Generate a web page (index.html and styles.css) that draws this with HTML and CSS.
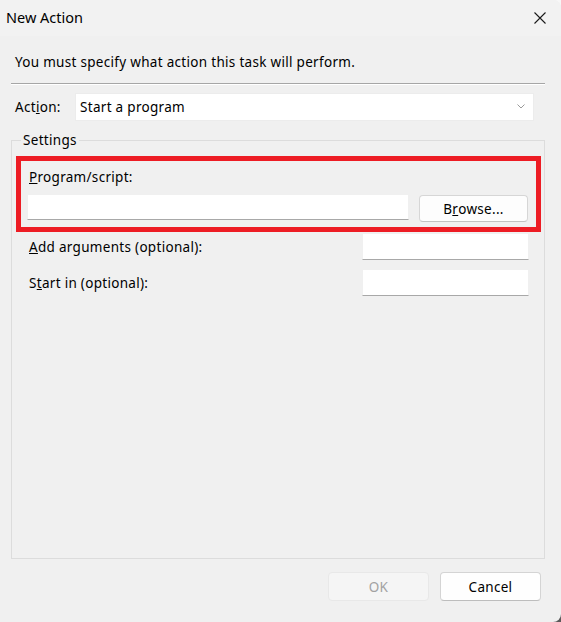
FILE: index.html
```html
<!DOCTYPE html>
<html lang="en">
<head>
<meta charset="utf-8">
<title>New Action</title>
<link rel="stylesheet" href="styles.css">
</head>
<body>
<div class="dialog">
  <div class="titlebar">
    <span class="title">New Action</span>
    <span class="close" aria-label="Close">
      <svg width="12" height="12" viewBox="0 0 12 12"><path d="M0.5 0.5 L11.5 11.5 M11.5 0.5 L0.5 11.5" stroke="#1a1a1a" stroke-width="1.1" fill="none"/></svg>
    </span>
  </div>
  <div class="content">
    <p class="instruction">You must specify what action this task will perform.</p>
    <div class="separator"></div>
    <div class="action-row">
      <span class="action-label">Act<u>i</u>on:</span>
      <div class="combo">
        <span class="combo-text">Start a program</span>
        <svg class="chevron" width="8" height="5" viewBox="0 0 8 5"><path d="M0.5 0.5 L4 4 L7.5 0.5" stroke="#9a9a9a" stroke-width="1" fill="none"/></svg>
      </div>
    </div>
    <fieldset class="settings">
      <legend>Settings</legend>
      <div class="highlight">
        <div class="field-label"><u>P</u>rogram/script:</div>
        <div class="program-row">
          <div class="textbox program-box"></div>
          <div class="button browse">B<u>r</u>owse...</div>
        </div>
      </div>
      <div class="opt-row first">
        <span class="opt-label"><u>A</u>dd arguments (optional):</span>
        <div class="textbox opt-box"></div>
      </div>
      <div class="opt-row">
        <span class="opt-label">S<u>t</u>art in (optional):</span>
        <div class="textbox opt-box"></div>
      </div>
    </fieldset>
    <div class="footer">
      <div class="button ok disabled">OK</div>
      <div class="button cancel">Cancel</div>
    </div>
  </div>
</div>
</body>
</html>
```
FILE: styles.css
```css
html, body {
  margin: 0;
  padding: 0;
}
body {
  width: 561px;
  height: 622px;
  background: linear-gradient(#f7f7f7 0, #f7f7f7 50%, #5a5a5a 50%, #5a5a5a 100%);
  font-family: "Noto Sans", "Open Sans", sans-serif;
  font-size: 13.5px;
  letter-spacing: 0.3px;
  color: #000;
  overflow: hidden;
}
.dialog {
  width: 561px;
  height: 622px;
  background: #f0f0f0;
  border-radius: 0 8px 8px 0;
  box-sizing: border-box;
}
.titlebar {
  height: 36px;
  box-sizing: border-box;
  padding: 7px 15px 0 6px;
  display: flex;
  justify-content: space-between;
  align-items: flex-start;
  background: #f2f2f2;
  border-radius: 0 8px 0 0;
}
.title {
  font-size: 14.5px;
  letter-spacing: 0;
  line-height: 20px;
}
.close {
  display: flex;
  margin-top: 5px;
}
.content {
  padding: 0 16px 0 11px;
}
.instruction {
  margin: 17px 0 0 4px;
  line-height: 18px;
}
.separator {
  margin-top: 12px;
  height: 0;
  border-top: 1px solid #a6a6a6;
  border-bottom: 1px solid #ffffff;
}
.action-row {
  margin-top: 8px;
  display: flex;
  align-items: center;
  height: 28px;
  padding-left: 4px;
}
.action-label {
  width: 60px;
  line-height: 18px;
}
.combo {
  width: 459px;
  height: 28px;
  box-sizing: border-box;
  background: #fff;
  border: 1px solid #ececec;
  display: flex;
  align-items: center;
  justify-content: space-between;
  padding: 0 8px 0 4px;
}
.combo-text {
  line-height: 18px;
}
.chevron {
  margin-top: -2px;
}
.settings {
  margin: 10px 0 0 0;
  padding: 0 0 262px 0;
  border: 1px solid #dcdcdc;
  min-width: 0;
}
.settings legend {
  margin-left: 9px;
  padding: 0 2px;
  line-height: 18px;
}
.highlight {
  margin: 7px 3px 0 4px;
  border: 5px solid #ed1c24;
  padding: 7px 0 5px 0;
}
.field-label {
  line-height: 18px;
  padding-left: 8px;
}
.program-row {
  margin-top: 8px;
  display: flex;
  align-items: flex-start;
  padding-left: 6px;
  gap: 10px;
}
.textbox {
  background: #fff;
  box-sizing: border-box;
  border: 1px solid #f0f0f0;
  border-bottom: 1px solid #a8a8a8;
}
.program-box {
  width: 382px;
  height: 26px;
}
.button {
  box-sizing: border-box;
  display: flex;
  align-items: center;
  justify-content: center;
  border-radius: 4px;
  line-height: 18px;
}
.browse {
  width: 109px;
  height: 27px;
  margin-top: 1px;
  background: #fdfdfd;
  border: 1px solid #d6d6d6;
  border-bottom-color: #c2c2c2;
}
.opt-row {
  display: flex;
  align-items: center;
  justify-content: space-between;
  margin-top: 9px;
  padding: 0 15px 0 17px;
}
.opt-row.first {
  margin-top: 1px;
}
.opt-label {
  line-height: 18px;
}
.opt-box {
  width: 167px;
  height: 27px;
}
.footer {
  margin-top: 13px;
  display: flex;
  justify-content: flex-end;
  gap: 11px;
  padding-right: 4px;
}
.footer .button {
  width: 101px;
  height: 29px;
}
.ok.disabled {
  background: #f5f5f5;
  border: 1px solid #e8e8e8;
  color: #a2a2a2;
}
.cancel {
  background: #fefefe;
  border: 1px solid #d4d4d4;
  border-bottom-color: #bdbdbd;
}
```
